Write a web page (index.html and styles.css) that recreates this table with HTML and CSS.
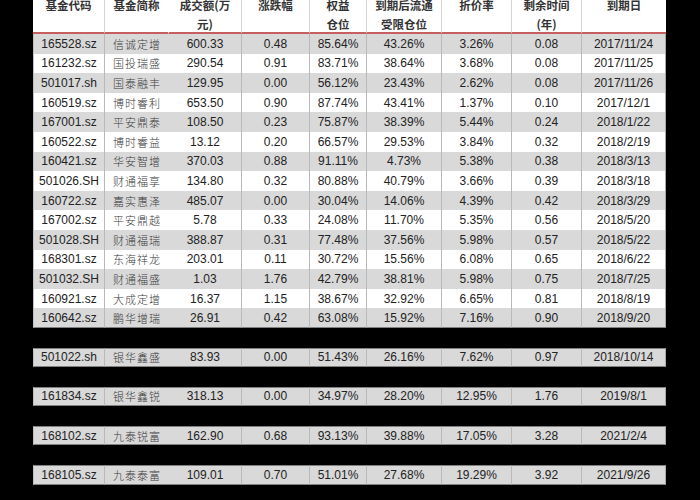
FILE: index.html
```html
<!DOCTYPE html>
<html lang="zh">
<head>
<meta charset="utf-8">
<link rel="stylesheet" href="styles.css">
</head>
<body>
<table class="grid">
  <colgroup>
    <col class="c1"><col class="c2"><col class="c3"><col class="c4"><col class="c5"><col class="c6"><col class="c7"><col class="c8"><col class="c9">
  </colgroup>
  <thead>
    <tr>
      <th><div class="h">基金代码</div></th>
      <th class="nosep"><div class="h">基金简称</div></th>
      <th><div class="h">成交额(万<br>元)</div></th>
      <th><div class="h">涨跌幅</div></th>
      <th><div class="h">权益<br>仓位</div></th>
      <th><div class="h">到期后流通<br>受限仓位</div></th>
      <th><div class="h">折价率</div></th>
      <th><div class="h">剩余时间<br>(年)</div></th>
      <th class="last"><div class="h">到期日</div></th>
    </tr>
  </thead>
  <tbody>
    <tr class="odd"><td>165528.sz</td><td class="name">信诚定增</td><td>600.33</td><td>0.48</td><td>85.64%</td><td>43.26%</td><td>3.26%</td><td>0.08</td><td class="last">2017/11/24</td></tr>
    <tr><td>161232.sz</td><td class="name">国投瑞盛</td><td>290.54</td><td>0.91</td><td>83.71%</td><td>38.64%</td><td>3.68%</td><td>0.08</td><td class="last">2017/11/25</td></tr>
    <tr class="odd"><td>501017.sh</td><td class="name">国泰融丰</td><td>129.95</td><td>0.00</td><td>56.12%</td><td>23.43%</td><td>2.62%</td><td>0.08</td><td class="last">2017/11/26</td></tr>
    <tr><td>160519.sz</td><td class="name">博时睿利</td><td>653.50</td><td>0.90</td><td>87.74%</td><td>43.41%</td><td>1.37%</td><td>0.10</td><td class="last">2017/12/1</td></tr>
    <tr class="odd"><td>167001.sz</td><td class="name">平安鼎泰</td><td>108.50</td><td>0.23</td><td>75.87%</td><td>38.39%</td><td>5.44%</td><td>0.24</td><td class="last">2018/1/22</td></tr>
    <tr><td>160522.sz</td><td class="name">博时睿益</td><td>13.12</td><td>0.20</td><td>66.57%</td><td>29.53%</td><td>3.84%</td><td>0.32</td><td class="last">2018/2/19</td></tr>
    <tr class="odd"><td>160421.sz</td><td class="name">华安智增</td><td>370.03</td><td>0.88</td><td>91.11%</td><td>4.73%</td><td>5.38%</td><td>0.38</td><td class="last">2018/3/13</td></tr>
    <tr><td>501026.SH</td><td class="name">财通福享</td><td>134.80</td><td>0.32</td><td>80.88%</td><td>40.79%</td><td>3.66%</td><td>0.39</td><td class="last">2018/3/18</td></tr>
    <tr class="odd"><td>160722.sz</td><td class="name">嘉实惠泽</td><td>485.07</td><td>0.00</td><td>30.04%</td><td>14.06%</td><td>4.39%</td><td>0.42</td><td class="last">2018/3/29</td></tr>
    <tr><td>167002.sz</td><td class="name">平安鼎越</td><td>5.78</td><td>0.33</td><td>24.08%</td><td>11.70%</td><td>5.35%</td><td>0.56</td><td class="last">2018/5/20</td></tr>
    <tr class="odd"><td>501028.SH</td><td class="name">财通福瑞</td><td>388.87</td><td>0.31</td><td>77.48%</td><td>37.56%</td><td>5.98%</td><td>0.57</td><td class="last">2018/5/22</td></tr>
    <tr><td>168301.sz</td><td class="name">东海祥龙</td><td>203.01</td><td>0.11</td><td>30.72%</td><td>15.56%</td><td>6.08%</td><td>0.65</td><td class="last">2018/6/22</td></tr>
    <tr class="odd"><td>501032.SH</td><td class="name">财通福盛</td><td>1.03</td><td>1.76</td><td>42.79%</td><td>38.81%</td><td>5.98%</td><td>0.75</td><td class="last">2018/7/25</td></tr>
    <tr><td>160921.sz</td><td class="name">大成定增</td><td>16.37</td><td>1.15</td><td>38.67%</td><td>32.92%</td><td>6.65%</td><td>0.81</td><td class="last">2018/8/19</td></tr>
    <tr class="odd end"><td>160642.sz</td><td class="name">鹏华增瑞</td><td>26.91</td><td>0.42</td><td>63.08%</td><td>15.92%</td><td>7.16%</td><td>0.90</td><td class="last">2018/9/20</td></tr>
    <tr class="gap"><td colspan="9"></td></tr>
    <tr class="odd solo"><td>501022.sh</td><td class="name">银华鑫盛</td><td>83.93</td><td>0.00</td><td>51.43%</td><td>26.16%</td><td>7.62%</td><td>0.97</td><td class="last">2018/10/14</td></tr>
    <tr class="gap"><td colspan="9"></td></tr>
    <tr class="odd solo"><td>161834.sz</td><td class="name">银华鑫锐</td><td>318.13</td><td>0.00</td><td>34.97%</td><td>28.20%</td><td>12.95%</td><td>1.76</td><td class="last">2019/8/1</td></tr>
    <tr class="gap"><td colspan="9"></td></tr>
    <tr class="odd solo"><td>168102.sz</td><td class="name">九泰锐富</td><td>162.90</td><td>0.68</td><td>93.13%</td><td>39.88%</td><td>17.05%</td><td>3.28</td><td class="last">2021/2/4</td></tr>
    <tr class="gap"><td colspan="9"></td></tr>
    <tr class="odd solo"><td>168105.sz</td><td class="name">九泰泰富</td><td>109.01</td><td>0.70</td><td>51.01%</td><td>27.68%</td><td>19.29%</td><td>3.92</td><td class="last">2021/9/26</td></tr>
  </tbody>
</table>
</body>
</html>
```
FILE: styles.css
```css
html, body {
  margin: 0;
  padding: 0;
  background: #000;
}

.grid {
  margin: -4px 0 0 33px;
  width: 633px;
  table-layout: fixed;
  border-collapse: separate;
  border-spacing: 0;
  font-family: "Liberation Sans", Arial, "Noto Sans CJK SC", sans-serif;
  font-size: 12px;
  color: #222;
}

.c1 { width: 72px; }
.c2 { width: 64px; }
.c3 { width: 73px; }
.c4 { width: 68px; }
.c5 { width: 57px; }
.c6 { width: 75px; }
.c7 { width: 70px; }
.c8 { width: 70px; }
.c9 { width: 84px; }

.grid th {
  background: #fff;
  padding: 0;
  vertical-align: top;
  border-right: 1px solid #d4d4d4;
  border-bottom: 2px solid #c75f60;
  font-family: "Noto Sans CJK SC", sans-serif;
  font-weight: 700;
  font-size: 11.5px;
  color: #333;
  text-align: center;
}

.grid th .h {
  height: 36px;
  line-height: 19px;
  overflow: visible;
}

.grid th.nosep { border-right-color: #fff; }
.grid th.last { border-right: none; }

.grid tbody tr { height: 19.6px; background: #fff; }
.grid tbody tr.odd { background: #d9d9d9; }

.grid td {
  padding: 0;
  line-height: 14px;
  text-align: center;
  vertical-align: middle;
  border-right: 1px solid #b9b9b9;
  white-space: nowrap;
}

.grid td:first-child { border-left: 1px solid #c0c0c0; }
.grid td.last { border-right: 1px solid #a8a8a8; }
.grid td.name {
  border-right: none;
  font-family: "Noto Sans CJK SC", sans-serif;
  font-weight: 300;
  font-size: 11px;
  letter-spacing: 1px;
  color: #3a3a3a;
}

.grid tr.end td { border-bottom: 1px solid #808080; }
.grid tr.solo td {
  border-top: 1px solid #808080;
  border-bottom: 1px solid #808080;
}

.grid tr.gap { background: #000; }
.grid tr.gap td {
  border: none;
  background: #000;
}
```
